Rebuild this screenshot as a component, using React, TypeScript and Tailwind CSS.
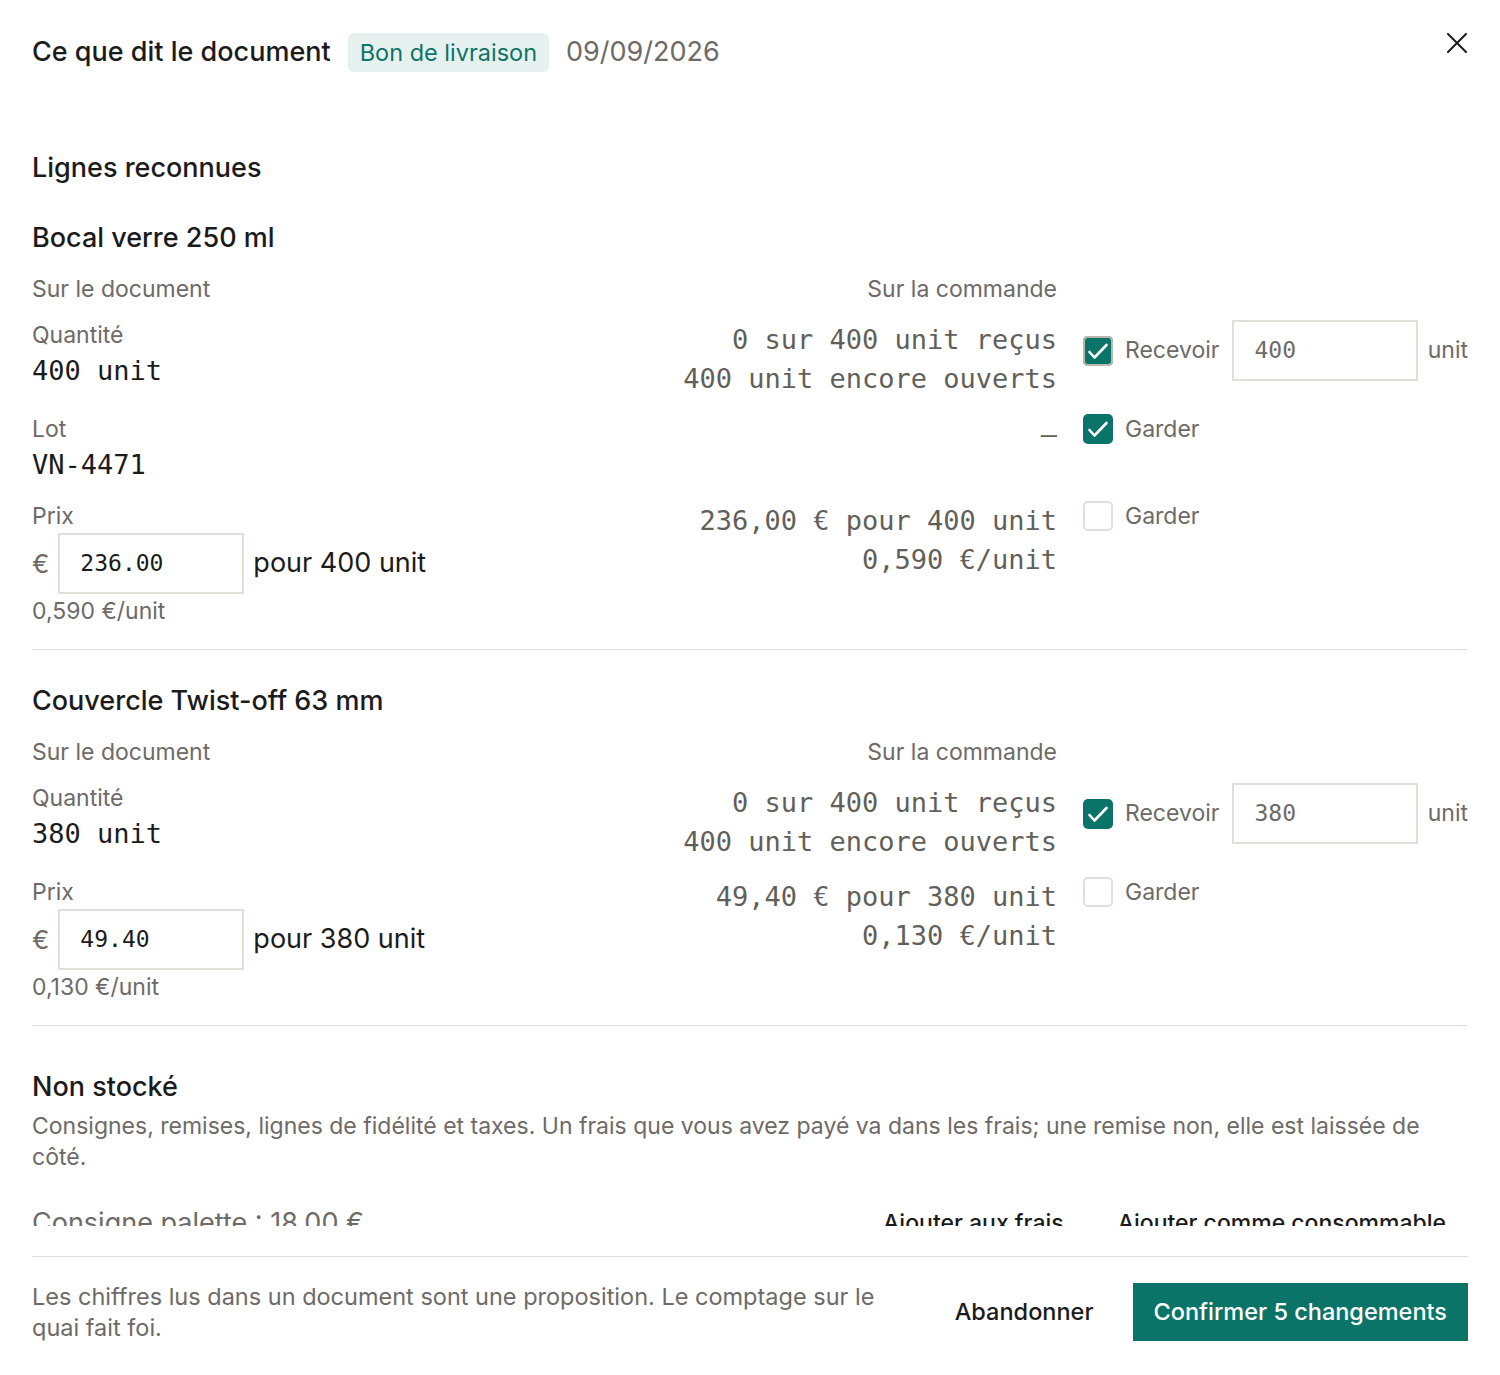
import clsx from "clsx";

const sans = "font-['Inter','Liberation_Sans',sans-serif]";
const mono = "font-['DejaVu_Sans_Mono','Liberation_Mono',monospace]";

type Line = {
  name: string;
  qty: string;
  received: string;
  open: string;
  receive: string;
  focused?: boolean;
  lot?: string;
  price: string;
  priceFor: string;
  perUnit: string;
  orderPrice: string;
  orderPerUnit: string;
};

const lines: Line[] = [
  {
    name: "Bocal verre 250 ml",
    qty: "400 unit",
    received: "0 sur 400 unit reçus",
    open: "400 unit encore ouverts",
    receive: "400",
    focused: true,
    lot: "VN-4471",
    price: "236.00",
    priceFor: "pour 400 unit",
    perUnit: "0,590 €/unit",
    orderPrice: "236,00 € pour 400 unit",
    orderPerUnit: "0,590 €/unit",
  },
  {
    name: "Couvercle Twist-off 63 mm",
    qty: "380 unit",
    received: "0 sur 400 unit reçus",
    open: "400 unit encore ouverts",
    receive: "380",
    price: "49.40",
    priceFor: "pour 380 unit",
    perUnit: "0,130 €/unit",
    orderPrice: "49,40 € pour 380 unit",
    orderPerUnit: "0,130 €/unit",
  },
];

function Checkbox({ checked, focused }: { checked?: boolean; focused?: boolean }) {
  return (
    <span
      className={clsx(
        "flex h-[30px] w-[30px] shrink-0 items-center justify-center rounded-[5px]",
        checked ? "bg-[#0b7468]" : "border-2 border-[#e2dfdb] bg-white",
        focused && "shadow-[inset_0_0_0_2px_#bdb7b1]"
      )}
    >
      {checked && (
        <svg width="30" height="30" viewBox="0 0 30 30" fill="none">
          <polyline
            points="6.5,16 11.5,21.5 23.5,9"
            stroke="white"
            strokeWidth="2.6"
            strokeLinecap="round"
            strokeLinejoin="round"
          />
        </svg>
      )}
    </span>
  );
}

function Keep({ checked }: { checked?: boolean }) {
  return (
    <label className="flex items-center gap-[12px]">
      <Checkbox checked={checked} />
      <span className="text-[23px] leading-[30px] text-[#6d6a67]">Garder</span>
    </label>
  );
}

function LineItem({ line, first }: { line: Line; first?: boolean }) {
  return (
    <div className={clsx("border-b border-[#e0ddd9] pb-[21px]", !first && "pt-[33px]")}>
      <h3 className="text-[27px] font-medium leading-[36px] text-[#1b1b1b]">{line.name}</h3>

      <div className="mt-[18px] grid grid-cols-[1fr_1fr_385px] items-start gap-x-[26px] gap-y-[16px]">
        <div className="text-[23px] leading-[30px] text-[#6d6a67]">Sur le document</div>
        <div className="text-right text-[23px] leading-[30px] text-[#6d6a67]">Sur la commande</div>
        <div />

        {/* quantité */}
        <div>
          <div className="text-[23px] leading-[31px] text-[#6d6a67]">Quantité</div>
          <div className={clsx(mono, "text-[27px] leading-[40px] text-[#1b1b1b]")}>{line.qty}</div>
        </div>
        <div className={clsx(mono, "text-right text-[27px] leading-[39px] text-[#625f5b]")}>
          <div>{line.received}</div>
          <div>{line.open}</div>
        </div>
        <div className="flex items-center gap-[12px]">
          <Checkbox checked focused={line.focused} />
          <span className="text-[23px] text-[#6d6a67]">Recevoir</span>
          <div
            className={clsx(
              mono,
              "ml-[1px] flex h-[61px] w-[186px] items-center border-2 border-[#e2dfdb] px-[20px] text-[23px] text-[#6d6a67]"
            )}
          >
            {line.receive}
          </div>
          <span className="ml-[-2px] text-[23px] text-[#6d6a67]">unit</span>
        </div>

        {/* lot */}
        {line.lot && (
          <>
            <div>
              <div className="text-[23px] leading-[31px] text-[#6d6a67]">Lot</div>
              <div className={clsx(mono, "text-[27px] leading-[40px] text-[#1b1b1b]")}>{line.lot}</div>
            </div>
            <div className={clsx(mono, "text-right text-[27px] leading-[39px] text-[#625f5b]")}>—</div>
            <Keep checked />
          </>
        )}

        {/* prix */}
        <div>
          <div className="text-[23px] leading-[30px] text-[#6d6a67]">Prix</div>
          <div className="mt-[2px] flex items-center gap-[9px]">
            <span className="text-[26px] text-[#6d6a67]">€</span>
            <div
              className={clsx(
                mono,
                "flex h-[61px] w-[186px] items-center border-2 border-[#e2dfdb] px-[20px] text-[23px] text-[#1b1b1b]"
              )}
            >
              {line.price}
            </div>
            <span className="text-[27px] text-[#1b1b1b]">{line.priceFor}</span>
          </div>
          <div className="text-[23px] leading-[34px] text-[#6d6a67]">{line.perUnit}</div>
        </div>
        <div className={clsx(mono, "text-right text-[27px] leading-[39px] text-[#625f5b]")}>
          <div>{line.orderPrice}</div>
          <div>{line.orderPerUnit}</div>
        </div>
        <Keep />
      </div>
    </div>
  );
}

export default function App() {
  return (
    <div className={clsx(sans, "h-[1375px] bg-white text-[#1b1b1b]")}>
      <header className="flex h-[100px] items-start justify-between px-[32px] pt-[32px]">
        <div className="flex items-center gap-[17px]">
          <h1 className="text-[27px] font-medium leading-[36px]">Ce que dit le document</h1>
          <span className="flex h-[39px] items-center rounded-[6px] bg-[#e6f1ef] px-[12px] text-[23.5px] text-[#0b7468]">
            Bon de livraison
          </span>
          <span className="text-[27px] text-[#6d6a67]">09/09/2026</span>
        </div>
        <button className="mr-[1px] mt-[1px] text-[#1b1b1b]" aria-label="Fermer">
          <svg width="20" height="20" viewBox="0 0 20 20" fill="none" stroke="currentColor" strokeWidth="2" strokeLinecap="round">
            <path d="M1 1L19 19M19 1L1 19" />
          </svg>
        </button>
      </header>

      <main className="h-[1126px] overflow-hidden px-[32px] pt-[50px]">
        <h2 className="text-[27px] font-medium leading-[36px]">Lignes reconnues</h2>
        <div className="mt-[34px]">
          {lines.map((line, i) => (
            <LineItem key={line.name} line={line} first={i === 0} />
          ))}
        </div>

        <section className="pt-[43px]">
          <h2 className="text-[27px] font-medium leading-[36px]">Non stocké</h2>
          <p className="mt-[6px] text-[23px] leading-[31px] text-[#6d6a67]">
            Consignes, remises, lignes de fidélité et taxes. Un frais que vous avez payé va dans les frais; une remise non, elle
            est laissée de côté.
          </p>
          <div className="mt-[23px] flex items-center justify-between">
            <span className="text-[27px] text-[#6d6a67]">Consigne palette : 18,00 €</span>
            <div className="flex items-center gap-[10px]">
              <button className="px-[22px] py-[10px] text-[23px] font-medium text-[#1b1b1b]">Ajouter aux frais</button>
              <button className="px-[22px] py-[10px] text-[23px] font-medium text-[#1b1b1b]">Ajouter comme consommable</button>
            </div>
          </div>
        </section>
      </main>

      <footer className="px-[32px] pt-[30px]">
        <div className="flex items-center border-t border-[#e0ddd9] pb-[32px] pt-[24px]">
          <p className="w-[860px] text-[23.5px] leading-[31px] text-[#6d6a67]">
            Les chiffres lus dans un document sont une proposition. Le comptage sur le quai fait foi.
          </p>
          <div className="ml-auto flex items-center gap-[19px]">
            <button className="h-[58px] px-[20px] text-[23.5px] font-medium text-[#1b1b1b]">Abandonner</button>
            <button className="h-[58px] bg-[#0b7468] px-[21px] text-[23.5px] font-medium text-white">
              Confirmer 5 changements
            </button>
          </div>
        </div>
      </footer>
    </div>
  );
}
